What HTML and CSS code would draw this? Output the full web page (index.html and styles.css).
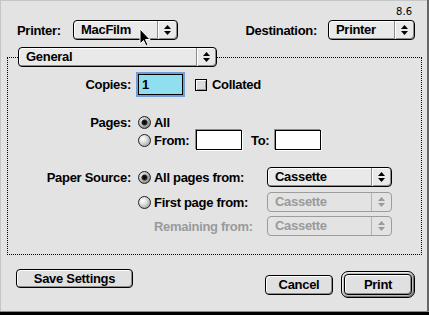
FILE: index.html
```html
<!DOCTYPE html>
<html>
	<head>
		<meta charset="UTF-8">
		<title>Print</title>
		<link rel="stylesheet" href="styles.css">
	</head>
	<body>
		<div class="dialog">
			<div class="version">8.6</div>

			<div class="top-row">
				<div class="pair">
					<span class="top-lbl printer-lbl">Printer:</span>
					<div class="popup popup-printer">
						<span class="popup-text">MacFilm</span>
						<span class="arrows"><svg width="7" height="10" viewBox="0 0 7 10"><polygon points="3.5,0 7,4 0,4"/><polygon points="0,6 7,6 3.5,10"/></svg></span>
						<svg class="cursor" width="12" height="19" viewBox="0 0 12 19"><path d="M1 1 L1 16 L4.5 12.5 L7 18 L9 17 L6.5 11.5 L11 11.5 Z" fill="#000" stroke="#fff" stroke-width="1"/></svg>
					</div>
				</div>
				<div class="pair">
					<span class="top-lbl dest-lbl">Destination:</span>
					<div class="popup popup-dest">
						<span class="popup-text">Printer</span>
						<span class="arrows"><svg width="7" height="10" viewBox="0 0 7 10"><polygon points="3.5,0 7,4 0,4"/><polygon points="0,6 7,6 3.5,10"/></svg></span>
					</div>
				</div>
			</div>

			<div class="group">
				<div class="popup popup-general">
					<span class="popup-text">General</span>
					<span class="arrows"><svg width="7" height="10" viewBox="0 0 7 10"><polygon points="3.5,0 7,4 0,4"/><polygon points="0,6 7,6 3.5,10"/></svg></span>
				</div>

				<div class="row row-copies">
					<span class="lbl">Copies:</span>
					<div class="focus"><div class="focus-in">1</div></div>
					<span class="check"></span>
					<span>Collated</span>
				</div>

				<div class="row row-all">
					<span class="lbl">Pages:</span>
					<span class="radio on"></span>
					<span>All</span>
				</div>
				<div class="row row-from">
					<span class="lbl"></span>
					<span class="radio"></span>
					<span class="opt-from">From:</span>
					<span class="field"></span>
					<span class="opt-to">To:</span>
					<span class="field"></span>
				</div>

				<div class="row row-src1">
					<span class="lbl">Paper Source:</span>
					<span class="radio on"></span>
					<span class="opt-src">All pages from:</span>
					<div class="popup popup-src">
						<span class="popup-text">Cassette</span>
						<span class="arrows"><svg width="7" height="10" viewBox="0 0 7 10"><polygon points="3.5,0 7,4 0,4"/><polygon points="0,6 7,6 3.5,10"/></svg></span>
					</div>
				</div>
				<div class="row row-src2">
					<span class="lbl"></span>
					<span class="radio"></span>
					<span class="opt-src">First page from:</span>
					<div class="popup popup-src disabled">
						<span class="popup-text">Cassette</span>
						<span class="arrows"><svg width="7" height="10" viewBox="0 0 7 10"><polygon points="3.5,0 7,4 0,4"/><polygon points="0,6 7,6 3.5,10"/></svg></span>
					</div>
				</div>
				<div class="row row-src3">
					<span class="lbl"></span>
					<span class="radio-space"></span>
					<span class="opt-src dim">Remaining from:</span>
					<div class="popup popup-src disabled">
						<span class="popup-text">Cassette</span>
						<span class="arrows"><svg width="7" height="10" viewBox="0 0 7 10"><polygon points="3.5,0 7,4 0,4"/><polygon points="0,6 7,6 3.5,10"/></svg></span>
					</div>
				</div>
			</div>

			<div class="bottom">
				<div class="btn save">Save Settings</div>
				<div class="right">
					<div class="btn cancel">Cancel</div>
					<div class="ring"><div class="btn print">Print</div></div>
				</div>
			</div>
		</div>
	</body>
</html>
```
FILE: styles.css
```css
* {
	margin: 0;
	padding: 0;
}

body {
	background: #e3e3e3;
	font: bold 13px "Liberation Sans", Arial, sans-serif;
	letter-spacing: -0.3px;
	color: #000;
}

.dialog {
	width: 429px;
	height: 315px;
	box-sizing: border-box;
	background: #e3e3e3;
	box-shadow: inset 0 -3px 0 #000, inset 0 -4px 0 #8a8a8a, inset -2px 0 0 #666, inset 1px 1px 0 #c6c6c6;
	display: flex;
	flex-direction: column;
	overflow: hidden;
}

.version {
	font: 10px "DejaVu Sans", sans-serif;
	letter-spacing: 0;
	text-align: right;
	line-height: 12px;
	height: 12px;
	padding: 6px 17px 0 0;
}

/* top line */
.top-row {
	display: flex;
	justify-content: space-between;
	align-items: center;
	height: 20px;
	margin-top: 2px;
	padding: 0 14px 0 17px;
}

.pair {
	display: flex;
	align-items: center;
}

.printer-lbl {
	width: 56px;
}

.dest-lbl {
	margin-right: 11px;
}

/* popup menus */
.popup {
	display: flex;
	height: 20px;
	box-sizing: border-box;
	border: 1px solid #000;
	border-radius: 4px;
	background: #e9e9e9;
	box-shadow: inset 1px 1px 0 #fff, inset -1px -1px 0 #8c8c8c;
	position: relative;
}

.popup-text {
	flex: 1;
	padding-left: 7px;
	line-height: 18px;
	white-space: nowrap;
}

.arrows {
	width: 19px;
	border-left: 1px solid #8c8c8c;
	box-shadow: inset 1px 0 0 #fff;
	display: flex;
	align-items: center;
	justify-content: center;
}

.popup-printer {
	width: 105px;
}

.popup-dest {
	width: 87px;
}

.popup-general {
	width: 199px;
	margin: -11px 0 0 10px;
}

.popup-src {
	width: 125px;
}

.popup.disabled {
	border-color: #9c9c9c;
	color: #9a9a9a;
	background: #e3e3e3;
	box-shadow: none;
}

.popup.disabled .arrows {
	border-left-color: #b4b4b4;
	box-shadow: none;
	fill: #9a9a9a;
}

.cursor {
	position: absolute;
	left: 65px;
	top: 7px;
}

/* group box */
.group {
	height: 198px;
	box-sizing: border-box;
	margin: 17px 7px 0 7px;
	border: 1px dotted #000;
}

.row {
	display: flex;
	align-items: center;
}

.lbl {
	width: 123px;
	margin-right: 5px;
	text-align: right;
	flex: none;
}

.row-copies {
	height: 25px;
	margin-top: 5px;
}

.row-all {
	height: 14px;
	margin-top: 18px;
}

.row-from {
	height: 22px;
}

.row-src1 {
	height: 20px;
	margin-top: 16px;
}

.row-src2 {
	height: 20px;
	margin-top: 5px;
}

.row-src3 {
	height: 20px;
	margin-top: 4px;
}

.focus {
	width: 49px;
	height: 25px;
	box-sizing: border-box;
	border: 2px solid #6f9fd6;
	flex: none;
}

.focus-in {
	height: 100%;
	box-sizing: border-box;
	border: 1px solid #000;
	background: #8fdff0;
	padding-left: 3px;
	line-height: 19px;
}

.check {
	width: 12px;
	height: 12px;
	box-sizing: border-box;
	border: 1px solid #000;
	background: #dcdcdc;
	box-shadow: inset 1px 1px 0 #fff, inset -1px -1px 0 #999;
	margin: 0 5px 0 10px;
	flex: none;
}

.radio,
.radio-space {
	width: 13px;
	height: 13px;
	margin: 0 3px 0 2px;
	flex: none;
}

.radio {
	box-sizing: border-box;
	border: 1px solid #222;
	border-radius: 50%;
	background: radial-gradient(circle at 35% 35%, #fff 0, #e2e2e2 35%, #8a8a8a 100%);
}

.radio.on {
	background: radial-gradient(circle at 50% 50%, #000 0, #222 2.5px, transparent 3.5px), radial-gradient(circle at 35% 35%, #fff 0, #bbb 45%, #555 100%);
}

.opt-from {
	width: 41px;
}

.opt-to {
	width: 23px;
	margin-left: 8px;
}

.field {
	width: 46px;
	height: 20px;
	margin: 1px;
	box-sizing: border-box;
	border: 1px solid #000;
	background: #fff;
	box-shadow: -1px -1px 0 #8c8c8c, 1px 1px 0 #fff;
	flex: none;
}

.opt-src {
	width: 113px;
	white-space: nowrap;
}

.dim {
	color: #9a9a9a;
}

/* buttons */
.bottom {
	display: flex;
	justify-content: space-between;
	align-items: flex-start;
	padding: 0 14px 0 16px;
}

.btn {
	box-sizing: border-box;
	border: 1px solid #000;
	border-radius: 4px;
	background: #e0e0e0;
	box-shadow: inset 1px 1px 0 #fff, inset -1px -1px 0 #8c8c8c;
	text-align: center;
}

.save {
	width: 117px;
	height: 19px;
	line-height: 17px;
	margin-top: 14px;
}

.right {
	display: flex;
	align-items: center;
	margin-top: 16px;
}

.cancel {
	width: 68px;
	height: 20px;
	line-height: 18px;
	margin-right: 8px;
}

.ring {
	width: 74px;
	height: 27px;
	box-sizing: border-box;
	border: 1px solid #000;
	border-radius: 7px;
	padding: 2px;
	background: #bdbdbd;
	box-shadow: inset 1px 1px 0 #eee, inset -1px -1px 0 #777;
}

.print {
	height: 21px;
	line-height: 19px;
}
```
